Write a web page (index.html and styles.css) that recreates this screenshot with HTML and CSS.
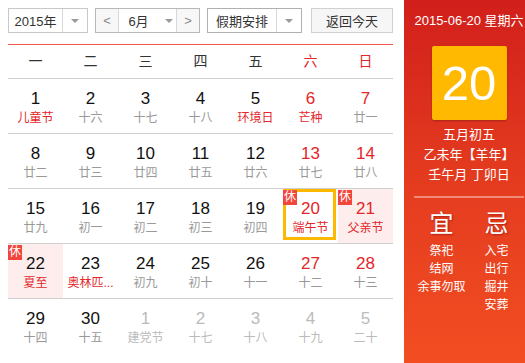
FILE: index.html
```html
<!DOCTYPE html>
<html>
<head>
  <meta charset="utf-8">
  <link rel="stylesheet" href="styles.css">
</head>
<body>
  <div class="cal">
    <div class="toolbar">
      <div class="sel year-sel">
        <span class="sel-text">2015年</span>
        <span class="sel-arrow"><i class="tri"></i></span>
      </div>
      <div class="sel month-sel">
        <span class="nav-btn">&lt;</span>
        <span class="sel-text month-text">6月<i class="tri"></i></span>
        <span class="nav-btn">&gt;</span>
      </div>
      <div class="sel hol-sel">
        <span class="sel-text">假期安排</span>
        <span class="sel-arrow"><i class="tri"></i></span>
      </div>
      <div class="today-btn">返回今天</div>
    </div>

    <div class="week">
      <span>一</span><span>二</span><span>三</span><span>四</span><span>五</span><span class="red">六</span><span class="red">日</span>
    </div>

    <div class="days">
      <div class="day"><b>1</b><em class="red">儿童节</em></div>
      <div class="day"><b>2</b><em>十六</em></div>
      <div class="day"><b>3</b><em>十七</em></div>
      <div class="day"><b>4</b><em>十八</em></div>
      <div class="day"><b>5</b><em class="red">环境日</em></div>
      <div class="day"><b class="red">6</b><em class="red">芒种</em></div>
      <div class="day"><b class="red">7</b><em>廿一</em></div>

      <div class="day"><b>8</b><em>廿二</em></div>
      <div class="day"><b>9</b><em>廿三</em></div>
      <div class="day"><b>10</b><em>廿四</em></div>
      <div class="day"><b>11</b><em>廿五</em></div>
      <div class="day"><b>12</b><em>廿六</em></div>
      <div class="day"><b class="red">13</b><em>廿七</em></div>
      <div class="day"><b class="red">14</b><em>廿八</em></div>

      <div class="day"><b>15</b><em>廿九</em></div>
      <div class="day"><b>16</b><em>初一</em></div>
      <div class="day"><b>17</b><em>初二</em></div>
      <div class="day"><b>18</b><em>初三</em></div>
      <div class="day"><b>19</b><em>初四</em></div>
      <div class="day today"><span class="rest">休</span><b class="red">20</b><em class="red">端午节</em></div>
      <div class="day off"><span class="rest">休</span><b class="red">21</b><em class="red">父亲节</em></div>

      <div class="day off"><span class="rest">休</span><b>22</b><em class="red">夏至</em></div>
      <div class="day"><b>23</b><em class="red">奥林匹...</em></div>
      <div class="day"><b>24</b><em>初九</em></div>
      <div class="day"><b>25</b><em>初十</em></div>
      <div class="day"><b>26</b><em>十一</em></div>
      <div class="day"><b class="red">27</b><em>十二</em></div>
      <div class="day"><b class="red">28</b><em>十三</em></div>

      <div class="day last"><b>29</b><em>十四</em></div>
      <div class="day last"><b>30</b><em>十五</em></div>
      <div class="day last other"><b>1</b><em>建党节</em></div>
      <div class="day last other"><b>2</b><em>十七</em></div>
      <div class="day last other"><b>3</b><em>十八</em></div>
      <div class="day last other"><b>4</b><em>十九</em></div>
      <div class="day last other"><b>5</b><em>二十</em></div>
    </div>
  </div>

  <div class="side">
    <div class="side-date">2015-06-20 星期六</div>
    <div class="big-day">20</div>
    <div class="lunar">
      <p>五月初五</p>
      <p>乙未年【羊年】</p>
      <p>壬午月 丁卯日</p>
    </div>
    <div class="side-line"></div>
    <div class="yiji">
      <div class="yj-col">
        <h4>宜</h4>
        <p>祭祀</p>
        <p>结网</p>
        <p>余事勿取</p>
      </div>
      <div class="yj-col">
        <h4>忌</h4>
        <p>入宅</p>
        <p>出行</p>
        <p>掘井</p>
        <p>安葬</p>
      </div>
    </div>
  </div>
</body>
</html>
```

FILE: styles.css
```css
:root {
    --red: #e3262a;
    --line: #cfcfcf;
    --font-family: "Liberation Sans", "Noto Sans CJK SC", sans-serif;
}

body {
    margin: 0;
    width: 525px;
    height: 363px;
    overflow: hidden;
    display: flex;
    font-family: var(--font-family);
    background: #fff;
}

.cal {
    width: 385px;
    padding: 8px 11px 0 8px;
}

/* top controls */
.toolbar {
    display: flex;
    height: 25px;
    font-size: 13px;
    color: #333;
}

.sel {
    display: flex;
    box-sizing: border-box;
    height: 25px;
    border: 1px solid #c8c8c8;
    background: #fff;
}

.sel-text {
    display: flex;
    align-items: center;
    justify-content: center;
    flex: 1;
}

.sel-arrow {
    width: 24px;
    border-left: 1px solid #d8d8d8;
    display: flex;
    align-items: center;
    justify-content: center;
}

.tri {
    display: inline-block;
    width: 0;
    height: 0;
    border-left: 4px solid transparent;
    border-right: 4px solid transparent;
    border-top: 4px solid #999;
}

.year-sel {
    width: 80px;
}

.month-sel {
    width: 105px;
    margin-left: 7px;
    border-color: #b8b8b8;
}

.nav-btn {
    width: 22px;
    background: #f7f7f7;
    color: #888;
    display: flex;
    align-items: center;
    justify-content: center;
    font-size: 13px;
}

.nav-btn:first-child {
    border-right: 1px solid #d8d8d8;
}

.nav-btn:last-child {
    border-left: 1px solid #d8d8d8;
}

.month-text {
    gap: 16px;
    padding-left: 6px;
}

.hol-sel {
    width: 95px;
    margin-left: 7px;
    border-color: #b0b0b0;
}

.today-btn {
    box-sizing: border-box;
    width: 82px;
    height: 25px;
    margin-left: 9px;
    border: 1px solid #d0d0d0;
    background: #f6f6f6;
    display: flex;
    align-items: center;
    justify-content: center;
}

/* week header */
.week {
    display: grid;
    grid-template-columns: repeat(7, 55px);
    margin-top: 11px;
    border-top: 1px solid #f0564c;
    border-bottom: 1px solid var(--line);
    height: 33px;
    line-height: 33px;
    font-size: 14px;
    color: #333;
    text-align: center;
}

.red {
    color: var(--red) !important;
}

/* days */
.days {
    display: grid;
    grid-template-columns: repeat(7, 55px);
}

.day {
    position: relative;
    height: 54px;
    border-bottom: 1px solid var(--line);
    display: flex;
    flex-direction: column;
    align-items: center;
}

.day.last {
    border-bottom: none;
}

.day b {
    font-weight: normal;
    font-size: 17px;
    line-height: 20px;
    margin-top: 10px;
    color: #111;
}

.day em {
    font-style: normal;
    font-size: 12px;
    line-height: 18px;
    color: #999;
    white-space: nowrap;
}

.day.other b,
.day.other em {
    color: #bbb;
}

.day.off {
    background: #fdeeed;
}

.day.today::after {
    content: "";
    position: absolute;
    left: 0;
    top: 0;
    right: 2px;
    bottom: 3px;
    border: 3px solid #ffb800;
}

.rest {
    position: absolute;
    left: 0;
    top: 1px;
    width: 14px;
    height: 15px;
    line-height: 15px;
    text-align: center;
    font-size: 12px;
    color: #fff;
    background: #f2453b;
    z-index: 2;
}

/* right panel */
.side {
    width: 110px;
    height: 363px;
    padding: 12px 1px 0 10px;
    background: linear-gradient(to bottom, #d11f1b 0%, #e33a1f 45%, #f34f22 100%);
    color: #fff;
    text-align: center;
}

.side-date {
    font-size: 13px;
    line-height: 18px;
    white-space: nowrap;
}

.big-day {
    width: 75px;
    height: 74px;
    margin: 16px auto 0;
    background: #ffb900;
    border-radius: 2px;
    box-shadow: 0 1px 2px rgba(0, 0, 0, 0.25);
    font-size: 49px;
    line-height: 74px;
}

.lunar {
    margin-top: 5px;
    font-size: 13px;
    line-height: 20px;
}

.lunar p,
.yj-col p {
    margin: 0;
}

.side-line {
    height: 2px;
    margin-top: 11px;
    background: rgba(255, 255, 255, 0.4);
}

.yiji {
    display: flex;
    margin-top: 11px;
}

.yj-col {
    flex: 1;
    font-size: 12px;
    line-height: 18px;
}

.yj-col h4 {
    margin: 0 0 3px;
    font-size: 24px;
    line-height: 30px;
    font-weight: normal;
    text-shadow: 1px 1px 2px rgba(120, 0, 0, 0.5);
}
```
